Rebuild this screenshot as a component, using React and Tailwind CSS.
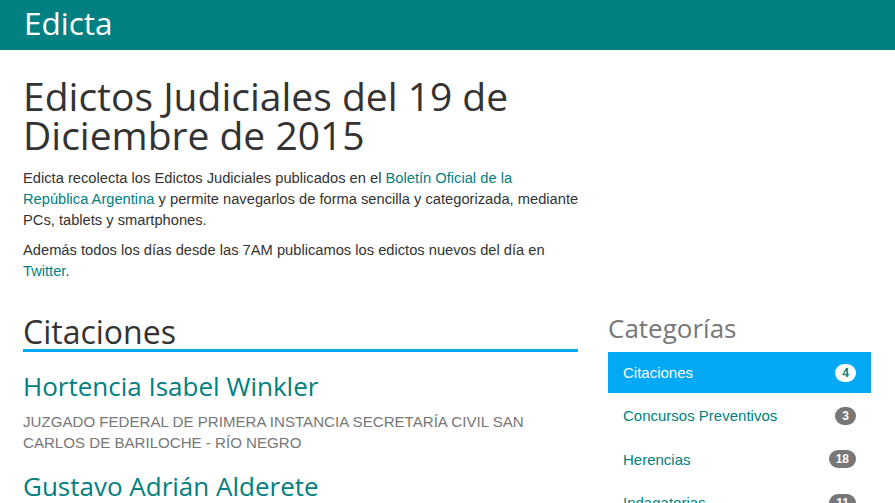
export default function App() {
  const cats = [
    { name: "Citaciones", n: 4, active: true },
    { name: "Concursos Preventivos", n: 3 },
    { name: "Herencias", n: 18 },
    { name: "Indagatorias", n: 11 },
    { name: "Quiebras", n: 5 },
  ];
  const os = { fontFamily: '"Open Sans", sans-serif' };
  return (
    <div className="bg-white min-h-screen text-[#333] text-[14.7px] leading-[21px]" style={{ fontFamily: '"Liberation Sans", Arial, sans-serif' }}>
      <div className="h-[50px] bg-[#008080] pl-[24px] pt-[7px]">
        <span className="block text-white text-[31.5px] leading-none" style={os}>Edicta</span>
      </div>
      <div className="pl-[23px] pr-[24px]">
        <h1 className="text-[39px] leading-[39px] mt-[26px] text-[#333] w-[555px]" style={os}>
          Edictos Judiciales del 19 de Diciembre de 2015
        </h1>
        <div className="w-[555px] mt-[14px]">
          <p className="mb-[9px] whitespace-nowrap">
            Edicta recolecta los Edictos Judiciales publicados en el{" "}
            <a className="text-[#008080]">Boletín Oficial de la<br />República Argentina</a> y permite navegarlos de forma sencilla y categorizada, mediante
            <br />PCs, tablets y smartphones.
          </p>
          <p>
            Además todos los días desde las 7AM publicamos los edictos nuevos del día en{" "}
            <a className="text-[#008080]">Twitter</a>.
          </p>
        </div>
        <div className="flex gap-[30px] mt-[32px]">
          <div className="w-[555px]">
            <h2 className="text-[32px] leading-[35px] text-[#333] border-b-[3px] border-[#03a9f4]" style={os}>Citaciones</h2>
            <h3 className="text-[26px] leading-[29px] text-[#008080] mt-[20px]" style={os}>Hortencia Isabel Winkler</h3>
            <p className="text-[#777] uppercase text-[15.1px] mt-[10px]">JUZGADO FEDERAL DE PRIMERA INSTANCIA SECRETARÍA CIVIL SAN CARLOS DE BARILOCHE - RÍO NEGRO</p>
            <h3 className="text-[26px] leading-[29px] text-[#008080] mt-[19px]" style={os}>Gustavo Adrián Alderete</h3>
          </div>
          <div className="w-[263px]">
            <h3 className="text-[26px] leading-[29px] text-[#777] mb-[8px]" style={os}>Categorías</h3>
            <div>
              {cats.map((c) => (
                <div key={c.name} className={"flex items-center justify-between px-[15px] h-[43.3px] border-y border-white text-[15px] " + (c.active ? "bg-[#03a9f4] text-white" : "text-[#008080]")}>
                  <span>{c.name}</span>
                  <span className={"text-[12px] font-bold leading-none px-[7px] py-[3px] rounded-[10px] " + (c.active ? "bg-white text-[#008080]" : "bg-[#777] text-white")}>{c.n}</span>
                </div>
              ))}
            </div>
          </div>
        </div>
      </div>
    </div>
  );
}
